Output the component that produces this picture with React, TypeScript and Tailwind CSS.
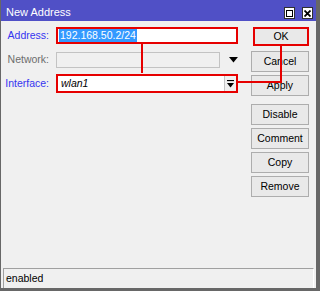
import clsx from 'clsx';

const font = { fontFamily: '"Liberation Sans", Arial, sans-serif' };

type BtnProps = {
	label: string;
	marked?: boolean;
};

const SideButton = ({ label, marked }: BtnProps) => {
	if (marked) {
		return (
			<div className="h-[21px] w-[58px] flex items-start">
				<div className="ml-[2px] h-[19px] w-[56px] border-2 border-[#e60000] bg-[#e9e9e9] flex items-center justify-center text-[10.5px] text-black">
					{label}
				</div>
			</div>
		);
	}
	return (
		<button className="h-[21px] w-[58px] border border-[#adadad] bg-[#e9e9e9] flex items-center justify-center text-[10.5px] text-black">
			{label}
		</button>
	);
};

const Label = ({ text, disabled }: { text: string; disabled?: boolean }) => (
	<span
		className={clsx(
			'w-[49px] shrink-0 text-right text-[10.5px] pr-[1px]',
			disabled ? 'text-[#6d6d6d]' : 'text-[#3535f0]',
		)}
	>
		{text}
	</span>
);

export default function App() {
	return (
		<div
			style={font}
			className="relative w-[320px] h-[291px] flex flex-col bg-[#f0f0f0] border-l border-r-[4px] border-b-[3px] border-[#676767] overflow-hidden"
		>
			{/* title bar */}
			<div className="h-[21px] shrink-0 bg-[#5050c6] flex items-start justify-between pl-[5px] pr-[3px]">
				<span className="mt-[7px] text-[11px] leading-none text-white">New Address</span>
				<div className="flex gap-[7px] mt-[7px]">
					<div className="w-[11px] h-[12px] bg-white border border-[#303030] flex items-center justify-center">
						<div className="w-[7px] h-[7px] border border-black" />
					</div>
					<div className="w-[11px] h-[12px] bg-white border border-[#303030] flex items-center justify-center">
						<svg width="7" height="7" viewBox="0 0 7 7">
							<path d="M0.5 0.5 L6.5 6.5 M6.5 0.5 L0.5 6.5" stroke="black" strokeWidth="1.8" />
						</svg>
					</div>
				</div>
			</div>

			{/* body */}
			<div className="flex flex-1">
				<div className="w-[237px] flex flex-col pt-[6px]">
					<div className="flex items-center h-[17px] gap-[6px]">
						<Label text="Address:" />
						<div className="w-[182px] h-[17px] border-2 border-[#e60000] bg-white flex items-center pl-[1px]">
							<span className="bg-[#3399ff] text-white text-[10.5px] leading-[13px] px-[1px]">
								192.168.50.2/24
							</span>
						</div>
					</div>
					<div className="flex items-center h-[16px] gap-[6px] mt-[8px]">
						<Label text="Network:" disabled />
						<div className="w-[165px] h-[16px] border border-[#c3c3c3] bg-[#f0f0f0]" />
						<svg width="9" height="6" viewBox="0 0 9 6" className="ml-[3px]">
							<path d="M0 0 H9 L4.5 5.5 Z" fill="black" />
						</svg>
					</div>
					<div className="flex items-center h-[19px] gap-[6px] mt-[6px]">
						<Label text="Interface:" />
						<div className="w-[182px] h-[19px] border-2 border-[#e60000] bg-white flex items-center">
							<span className="flex-1 pl-[3px] text-[10.5px] italic text-black">wlan1</span>
							<div className="w-[12px] h-full border-l border-[#c3c3c3] bg-[#f0f0f0] flex items-center justify-center">
								<svg width="7" height="8" viewBox="0 0 7 8">
									<path d="M0 0.5 H7" stroke="black" strokeWidth="1.2" />
									<path d="M0 3 H7 L3.5 7.5 Z" fill="black" />
								</svg>
							</div>
						</div>
					</div>
				</div>

				<div className="ml-[13px] flex flex-col pt-[6px]">
					<div className="flex flex-col gap-[3px]">
						<SideButton label="OK" marked />
						<SideButton label="Cancel" />
						<SideButton label="Apply" />
					</div>
					<div className="flex flex-col gap-[3px] mt-[8px]">
						<SideButton label="Disable" />
						<SideButton label="Comment" />
						<SideButton label="Copy" />
						<SideButton label="Remove" />
					</div>
				</div>
			</div>

			{/* status bar */}
			<div className="mx-[2px] h-[20px] shrink-0 border-t border-l border-[#a0a0a0] border-r border-r-white flex items-center px-[2px] text-[10.5px] text-black">
				enabled
			</div>

			{/* annotation connectors */}
			<div className="absolute left-[140px] top-[44px] w-[2px] h-[29px] bg-[#e60000]" />
			<div className="absolute left-[279px] top-[45px] w-[2px] h-[38px] bg-[#e60000]" />
			<div className="absolute left-[236px] top-[81px] w-[45px] h-[2px] bg-[#e60000]" />
		</div>
	);
}
